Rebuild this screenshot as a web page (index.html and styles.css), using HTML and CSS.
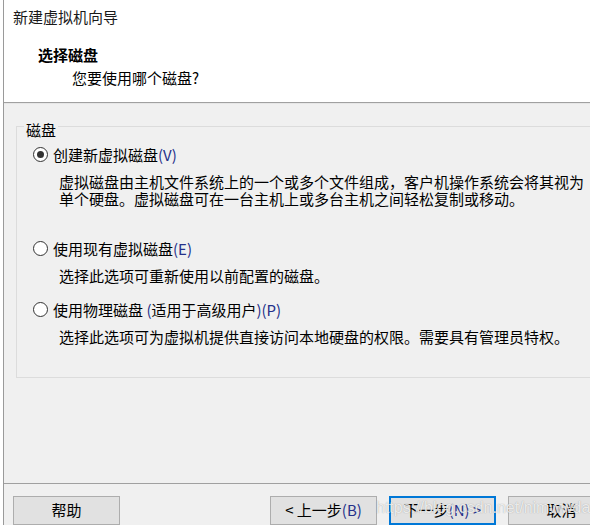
FILE: index.html
```html
<!DOCTYPE html>
<html lang="zh-CN">
<head>
<meta charset="utf-8">
<title>新建虚拟机向导</title>
<link rel="stylesheet" href="styles.css">
</head>
<body>
<div class="dialog">
  <header class="header">
    <div class="title">新建虚拟机向导</div>
    <div class="heading">选择磁盘</div>
    <div class="subtitle">您要使用哪个磁盘?</div>
  </header>
  <main class="body">
    <section class="group">
      <span class="group-label">磁盘</span>
      <div class="option">
        <span class="radio on"></span>
        <span class="opt-label">创建新虚拟磁盘<span class="m">(V)</span></span>
      </div>
      <div class="desc desc-tall">虚拟磁盘由主机文件系统上的一个或多个文件组成，客户机操作系统会将其视为<br>单个硬盘。虚拟磁盘可在一台主机上或多台主机之间轻松复制或移动。</div>
      <div class="option">
        <span class="radio"></span>
        <span class="opt-label">使用现有虚拟磁盘<span class="m">(E)</span></span>
      </div>
      <div class="desc">选择此选项可重新使用以前配置的磁盘。</div>
      <div class="option">
        <span class="radio"></span>
        <span class="opt-label">使用物理磁盘 <span class="m">(</span>适用于高级用户<span class="m">)(P)</span></span>
      </div>
      <div class="desc">选择此选项可为虚拟机提供直接访问本地硬盘的权限。需要具有管理员特权。</div>
    </section>
  </main>
  <footer class="footer">
    <button class="btn">帮助</button>
    <button class="btn btn-back">&lt; 上一步<span class="m">(B)</span></button>
    <button class="btn btn-default">下一步<span class="m">(N) &gt;</span></button>
    <button class="btn">取消</button>
  </footer>
  <div class="watermark">https://blog.csdn.net/nimwwda</div>
</div>
</body>
</html>
```

FILE: styles.css
```css
html, body {
  margin: 0;
  padding: 0;
  background: #ffffff;
}

body {
  font-family: "Noto Sans CJK SC", "Noto Sans", sans-serif;
  font-size: 15px;
  line-height: 17px;
  color: #000;
}

.dialog {
  position: relative;
  margin-left: 3px;
  width: 586px;
  height: 525px;
  border-left: 1px solid #9a9a9a;
  overflow: hidden;
  display: flex;
  flex-direction: column;
}

.header {
  height: 106px;
  box-sizing: border-box;
  background: #ffffff;
  border-bottom: 1px solid #a0a0a0;
  padding: 8px 0 0 9px;
}

.title {
  color: #1a1a1a;
}

.heading {
  margin-top: 21px;
  margin-left: 25px;
  font-weight: bold;
}

.subtitle {
  margin-top: 6px;
  margin-left: 59px;
}

.body {
  background: #f0f0f0;
  height: 380px;
  flex: none;
  box-sizing: border-box;
  padding: 23px 0 0 12px;
  box-shadow: inset 0 1px 0 #e6e6e6;
}

.group {
  position: relative;
  border: 1px solid #dcdcdc;
  margin-right: -30px;
  padding: 19px 0 32px 17px;
}

.group-label {
  position: absolute;
  top: -6px;
  left: 7px;
  padding: 0 2px;
  background: #f0f0f0;
  line-height: 17px;
}

.option {
  display: flex;
  align-items: center;
  height: 17px;
}

.option + .desc {
  margin-top: 10px;
}

.desc + .option {
  margin-top: 17px;
}

.desc-tall {
  min-height: 34px;
  padding-bottom: 16px;
}

.radio {
  position: relative;
  width: 15px;
  height: 15px;
  box-sizing: border-box;
  border: 1px solid #333;
  border-radius: 50%;
  background: #fff;
  margin-left: -1px;
  margin-right: 5px;
}

.radio.on::after {
  content: "";
  position: absolute;
  left: 3px;
  top: 3px;
  width: 7px;
  height: 7px;
  border-radius: 50%;
  background: #333;
}

.desc {
  padding-left: 25px;
  white-space: nowrap;
}

.m {
  color: #25318a;
}

.footer {
  background: #f0f0f0;
  border-top: 1px solid #a0a0a0;
  flex: 1;
  display: flex;
  align-items: flex-start;
  padding: 12px 0 0 9px;
  gap: 12px;
}

.btn {
  flex: none;
  width: 107px;
  height: 29px;
  box-sizing: border-box;
  background: #e1e1e1;
  border: 1px solid #adadad;
  font-family: inherit;
  font-size: 15px;
  line-height: 17px;
  color: #000;
  padding: 0 0 2px;
  margin: 0;
}

.btn-back {
  margin-left: 138px;
}

.btn-default {
  border: 2px solid #0078d7;
}

.watermark {
  position: absolute;
  left: 372px;
  top: 499px;
  font-family: "Liberation Sans", sans-serif;
  font-size: 16px;
  line-height: 18px;
  color: rgba(255, 255, 255, 0.8);
  text-shadow: 0 0 1px rgba(90, 90, 90, 0.55);
  pointer-events: none;
  white-space: nowrap;
}
```
